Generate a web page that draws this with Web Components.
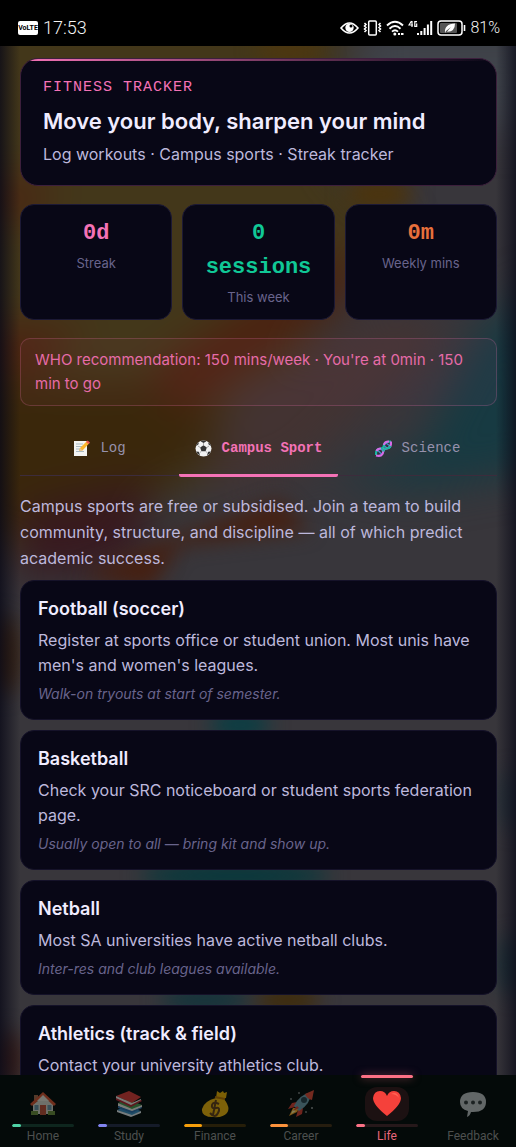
<!DOCTYPE html>
<html lang="en">
<head>
<meta charset="utf-8">
<meta name="viewport" content="width=device-width, initial-scale=1">
<title>Fitness Tracker</title>
<style>
  html, body { margin: 0; height: 100%; background: #000; }
  body {
    --pink: #f472b6; --green: #10c896; --orange: #e8703c;
    --ink: #f0ecff; --soft: #bdb8dc; --mute: #68648c;
    --card: #080716; --line: #1c1935;
    --mono: "Liberation Mono", monospace;
    font-family: Inter, "Liberation Sans", sans-serif;
    font-size: 16px; line-height: 24px; color: var(--soft);
  }
</style>
</head>
<body>
<fitness-app></fitness-app>

<template id="tpl-app">
  <style>
    :host { display: flex; flex-direction: column; height: 100vh; overflow: hidden; }
    .screen { position: relative; flex: 1; min-height: 0; overflow: hidden; display: flex; }
    main { position: relative; flex: 1; overflow-y: auto; scrollbar-width: none; padding: 12px 19px 24px 20px; }
    .stats { display: grid; grid-template-columns: repeat(3, 1fr); gap: 10px; margin: 18px 0; }
    .intro { margin: 16px 0 9px; line-height: 26px; }
    .list { display: grid; gap: 10px; }
  </style>
  <status-bar></status-bar>
  <div class="screen">
    <blur-backdrop></blur-backdrop>
    <main>
      <hero-card>
        <span slot="kicker">FITNESS TRACKER</span>
        <span slot="title">Move your body, sharpen your mind</span>
        <span slot="sub">Log workouts · Campus sports · Streak tracker</span>
      </hero-card>
      <section class="stats">
        <stat-tile style="--tone: var(--pink)">0d<span slot="label">Streak</span></stat-tile>
        <stat-tile style="--tone: var(--green)">0 sessions<span slot="label">This week</span></stat-tile>
        <stat-tile style="--tone: var(--orange)">0m<span slot="label">Weekly mins</span></stat-tile>
      </section>
      <goal-note>WHO recommendation: 150 mins/week · You're at 0min · 150 min to go</goal-note>
      <section-tabs></section-tabs>
      <p class="intro">Campus sports are free or subsidised. Join a team to build community, structure, and discipline — all of which predict academic success.</p>
      <div class="list">
        <sport-card><span slot="title">Football (soccer)</span>Register at sports office or student union. Most unis have men's and women's leagues.<span slot="note">Walk-on tryouts at start of semester.</span></sport-card>
        <sport-card><span slot="title">Basketball</span>Check your SRC noticeboard or student sports federation page.<span slot="note">Usually open to all — bring kit and show up.</span></sport-card>
        <sport-card><span slot="title">Netball</span>Most SA universities have active netball clubs.<span slot="note">Inter-res and club leagues available.</span></sport-card>
        <sport-card><span slot="title">Athletics (track &amp; field)</span>Contact your university athletics club.</sport-card>
      </div>
    </main>
  </div>
  <bottom-nav></bottom-nav>
</template>

<template id="tpl-status">
  <style>
    :host { display: flex; align-items: center; gap: 5px; height: 36px; padding: 10px 16px 0 18px; background: #000; color: #f4f4f4; font: 300 18px/36px Roboto, sans-serif; }
    .volte { font: 700 7px/14px Roboto, sans-serif; background: #fff; color: #000; border-radius: 2px; min-width: 20px; text-align: center; white-space: nowrap; }
    .icons { margin-left: auto; display: flex; align-items: center; gap: 4px; }
    svg { display: block; }
    .pct { font-size: 16px; }
  </style>
  <span class="volte">VoLTE</span><span>17:53</span>
  <div class="icons">
    <svg width="19" height="14" viewBox="0 0 19 14"><path d="M1 7Q9.500-3 18 7Q9.500 17 1 7Z" fill="none" stroke="#fff" stroke-width="1.600"/><circle cx="9.500" cy="6.800" r="4.200" fill="#fff"/><circle cx="11" cy="5" r="1.500" fill="#000"/></svg>
    <svg width="19" height="16" viewBox="0 0 19 16" fill="none" stroke="#fff"><rect x="5.700" y="1" width="7.600" height="14" rx="1" stroke-width="1.500"/><path d="M1.500 3l1.500 1.500-1.500 1.500 1.500 1.500-1.500 1.500 1.500 1.500-1.500 1.500M17.500 3l-1.500 1.500 1.500 1.500-1.500 1.500 1.500 1.500-1.500 1.500 1.500 1.500" stroke-width="1.500"/></svg>
    <svg width="18" height="16" viewBox="0 0 18 16" fill="none" stroke="#fff" stroke-width="1.900"><path d="M1 5.500Q9-2 17 5.500M3.500 8.700Q9 3.500 14.500 8.700M6 11.600Q9 9 12 11.600"/><circle cx="8.800" cy="14" r="1.500" fill="#fff" stroke="none"/><path d="M12 14h2m1 0h2.500" stroke-width="2.200"/></svg>
    <svg width="25" height="16" viewBox="0 0 25 16"><path d="M3.500 1L1 5h4M4 1v6M9 1.700H6.800v4.600H8.700V4H8" fill="none" stroke="#fff" stroke-width="1.200"/><path d="M9 13h2v2H9zM12.300 11h2v4h-2zM15.600 8h2v7h-2zM18.900 4.500h2V15h-2zM22.200 1h2v14h-2z" fill="#fff"/></svg>
    <svg width="29" height="16" viewBox="0 0 29 16"><rect x="1" y="1" width="24" height="14" rx="3" fill="none" stroke="#fff" stroke-width="1.500"/><rect x="3" y="3" width="17" height="10" rx="1" fill="#555"/><path d="M8 13Q7 4 18 3.500Q18 12 10 11.700L14 7L9 11Z" fill="#fff"/><path d="M27.500 5v6" stroke="#fff" stroke-width="1.600"/></svg>
    <span class="pct">81%</span>
  </div>
</template>

<template id="tpl-backdrop">
  <style>
    :host { position: absolute; inset: 0; }
    svg { display: block; width: 100%; height: 100%; }
    :host::after { content: ""; position: absolute; inset: 0; background: linear-gradient(90deg, rgba(8, 8, 22, .75), rgba(8, 8, 22, 0) 20px calc(100% - 20px), rgba(8, 8, 22, .7)); }
  </style>
  <svg viewBox="0 46 516 1029" preserveAspectRatio="none" aria-hidden="true">
    <defs><filter id="b" x="-30%" y="-30%" width="160%" height="160%" color-interpolation-filters="sRGB"><feGaussianBlur stdDeviation="20"/></filter>
    <filter id="s" x="-40%" y="-60%" width="180%" height="220%" color-interpolation-filters="sRGB"><feGaussianBlur stdDeviation="10"/></filter></defs>
    <rect y="46" width="516" height="1029" fill="#38363b"/>
    <g filter="url(#b)">
      <path d="M-40 0H345L330 160 400 230 320 330 250 400 200 480 60 560-40 540Z" fill="#43371a"/>
      <path d="M-40 380H170L230 430 120 520-40 540Z" fill="#3a270b"/>
      <path d="M-20 180L60 185 30 215-20 220ZM-20 325L90 330 20 380-20 370ZM150 370L350 240 350 300 180 415Z" fill="#4c2110"/>
      <path d="M230 390L400 310 450 330 300 470 200 500Z" fill="#433332"/>
      <path d="M540 280L480 330 420 450 330 480 420 490 540 470Z" fill="#173a42"/>
      <path d="M360 30H550V130H360Z" fill="#40444b"/>
      <path d="M20 510L150 480 140 560 20 580Z" fill="#38191f"/>
    </g>
    <g filter="url(#s)">
      <ellipse cx="290" cy="50" rx="35" ry="14" fill="#4d3710"/>
      <ellipse cx="380" cy="194" rx="34" ry="16" fill="#4c340c"/>
      <path d="M80 575L180 535 280 500 310 530 180 545 150 590Z" fill="#452012"/>
      <ellipse cx="4" cy="655" rx="16" ry="40" fill="#38210f"/>
      <ellipse cx="240" cy="725" rx="30" ry="14" fill="#083e44"/>
      <ellipse cx="235" cy="876" rx="95" ry="14" fill="#06383c"/>
      <ellipse cx="205" cy="1000" rx="45" ry="12" fill="#10343b"/>
      <ellipse cx="288" cy="1000" rx="32" ry="12" fill="#402b05"/>
      <ellipse cx="8" cy="1060" rx="16" ry="30" fill="#351c18"/>
      <ellipse cx="510" cy="965" rx="12" ry="30" fill="#1a3037"/>
      <ellipse cx="510" cy="800" rx="12" ry="30" fill="#25323a"/>
    </g>
  </svg>
</template>

<template id="tpl-hero">
  <style>
    :host { display: block; position: relative; overflow: hidden; border: 1px solid #3c1f3c; border-radius: 18px; background: var(--card); padding: 17px 22px 19px; }
    :host::before { content: ""; position: absolute; inset: 0 0 auto; height: 2px; background: linear-gradient(90deg, var(--pink), transparent); }
    .kicker { color: var(--pink); font: 15px/24px var(--mono); letter-spacing: 1px; }
    h1 { margin: 4px 0; font-size: 22px; line-height: 34px; font-weight: 600; color: var(--ink); }
  </style>
  <div class="kicker"><slot name="kicker"></slot></div>
  <h1><slot name="title"></slot></h1>
  <div><slot name="sub"></slot></div>
</template>

<template id="tpl-stat">
  <style>
    :host { display: block; border: 1px solid var(--line); border-radius: 14px; background: var(--card); padding: 12px 12px 10px; text-align: center; }
    .value { font: 700 22px/34px var(--mono); color: var(--tone); }
    .label { font-size: 13px; color: var(--mute); }
  </style>
  <div class="value"><slot></slot></div>
  <div class="label"><slot name="label"></slot></div>
</template>

<template id="tpl-note">
  <style>:host { display: block; border: 1px solid rgba(244, 114, 182, .22); border-radius: 10px; background: rgba(244, 114, 182, .04); padding: 9px 14px; font-size: 15px; color: #e66ba8; }</style>
  <slot></slot>
</template>

<template id="tpl-tabs">
  <style>
    :host { display: grid; grid-template-columns: repeat(3, 1fr); margin-top: 17px; background: linear-gradient(#3c2c3c, #3c2c3c) 0 52px / 100% 1px no-repeat; }
    button { all: unset; box-sizing: border-box; display: flex; justify-content: center; align-items: center; gap: 10px; padding: 13px 0 14px; border-bottom: 3px solid transparent; color: #9691ac; font: 14px/24px var(--mono); white-space: nowrap; cursor: pointer; }
    button[aria-selected="true"] { color: var(--pink); font-weight: 700; border-color: var(--pink); border-radius: 2px; }
    svg { width: 17px; height: 17px; display: block; }
  </style>
  <button role="tab" aria-selected="false"><svg viewBox="0 0 17 17"><path d="M1 1h13v15H1z" fill="#f4f4f2"/><path d="M3 4h7M3 6.500h6M3 9h5M3 11.500h8" stroke="#a9bac2"/><path d="M6 11l1-3 7-7 2.500 2-7 7.500z" fill="#fcb52d"/><path d="M13 2l1.500-1.500L17 2.500 15.500 4z" fill="#ef5350"/><path d="M6 11l1-3 2.500 2.500z" fill="#e4c39b"/></svg>Log</button>
  <button role="tab" aria-selected="true"><svg viewBox="0 0 17 17"><circle cx="8.500" cy="8.500" r="8" fill="#f2f2f2"/><path d="M8.500 5.200l3.300 2.300-1.200 3.700H6.400L5.200 7.500zM5.500 1.300L8.500 3l3-1.700Q8.500-.2 5.500 1.300ZM1 6.200l2.500-2L3.800 2.300Q1.200 4 1 6.200ZM16 6.200l-2.500-2-.3-1.900Q15.800 4 16 6.200ZM1 11.500l2.800.2 1.200 3.500Q2 14 1 11.500ZM16 11.500l-2.800.2-1.200 3.500Q15 14 16 11.500Z" fill="#343434"/><path d="M8.500 3v2.200M5.200 7.500L3 6M11.800 7.500L14 6M6.400 11.200L4.500 13M10.600 11.200l1.900 1.800" stroke="#888" stroke-width=".7"/></svg>Campus Sport</button>
  <button role="tab" aria-selected="false"><svg viewBox="0 0 17 17" fill="none" stroke-width="2.200"><path d="M3 10.500l4 4M6 9l3 3M9 5.500l3 2.500M11 3l4 3" stroke="#478bd2" stroke-width="1.300"/><path d="M1 15Q.5 8.500 6 8.500Q9 8.500 9 5Q9.500 1.500 16 1.500" stroke="#18b7a4"/><path d="M1 15.500Q8 17 8.200 11.500Q8.300 8.500 11.500 8.500Q16.500 8 16 1.500" stroke="#d66be8"/><path d="M1.500 11Q2.500 8.500 6 8.500M9 5Q9.500 1.500 14 1.500" stroke="#d66be8"/><path d="M8.200 11.500Q8.500 8.500 11.500 8.500Q14.500 8.300 15.500 6" stroke="#18b7a4"/></svg>Science</button>
</template>

<template id="tpl-sport">
  <style>
    :host { display: block; border: 1px solid #151229; border-radius: 14px; background: var(--card); padding: 14px 16px 14px 17px; }
    h2 { margin: 0 0 5px; font-size: 18px; line-height: 28px; font-weight: 600; color: var(--ink); }
    .text { line-height: 25px; }
    .note { margin-top: 5px; font-size: 14px; line-height: 22px; font-style: italic; color: var(--mute); }
  </style>
  <h2><slot name="title"></slot></h2>
  <div class="text"><slot></slot></div>
  <div class="note"><slot name="note"></slot></div>
</template>

<template id="tpl-nav">
  <style>
    :host { display: grid; grid-template-columns: repeat(6, 1fr); height: 72px; background: #040a09; }
  </style>
  <nav-item tone="#4fd1a5" level="15" icon="home">Home</nav-item>
  <nav-item tone="#8184f0" level="14" icon="study">Study</nav-item>
  <nav-item tone="#f59e0b" level="29" icon="money">Finance</nav-item>
  <nav-item tone="#fb923c" level="29" icon="rocket">Career</nav-item>
  <nav-item tone="#fb7185" level="14" icon="heart" active>Life</nav-item>
  <nav-item tone="transparent" level="0" icon="chat">Feedback</nav-item>
</template>

<template id="tpl-item">
  <style>
    :host { display: block; position: relative; }
    a { display: flex; flex-direction: column; align-items: center; height: 100%; padding-top: 12px; box-sizing: border-box; color: #4d504f; text-decoration: none; font: 12px/16px Roboto, sans-serif; }
    .icon { width: 44px; height: 34px; display: grid; place-items: center; border-radius: 12px; }
    .icon svg { width: 28px; height: 28px; opacity: .5; }
    .bar { width: 72%; height: 3px; border-radius: 2px; margin: 3px 0 1px; position: relative; overflow: hidden; }
    .bar::before { content: ""; position: absolute; inset: 0; background: var(--tone); opacity: .14; }
    .bar i { position: relative; display: block; height: 100%; border-radius: 2px; background: var(--tone); width: var(--level); }
    :host([active]) a { color: #e8667a; }
    :host([active]) .icon { background: #1c1112; }
    :host([active]) .icon svg { opacity: 1; }
    :host([active])::before { content: ""; position: absolute; top: 0; left: 20%; width: 60%; height: 3px; border-radius: 2px; background: var(--tone); box-shadow: 0 0 8px rgba(251, 113, 133, .5); }
  </style>
  <a href="#"><span class="icon"></span><span class="bar"><i></i></span><slot></slot></a>
</template>

<script>
  const ICONS = {
    home: '<path d="M4 13L14 4l10 9v11H4z" fill="#d8d5cb"/><path d="M5 5h4v6l-4 3z" fill="#a66a4b"/><path d="M1 14L14 2l13 12-2 2L14 6 3 16z" fill="#d9532f"/><path d="M14 5l6 6H8z" fill="#e9e4d8"/><path d="M11 15h6v10h-6z" fill="#bd4f38"/><path d="M5.500 15h4v5h-4zM18.500 15h4v5h-4z" fill="#6c94a7"/><path d="M2 21h7v4H2zM19 21h7v4h-7z" fill="#6c8d3c"/>',
    study: '<path d="M2 20l9-4 15 5-9 5z" fill="#3b8fc4"/><path d="M2 20v2l14 5 10-4v-2l-9 4z" fill="#e8eef2"/><path d="M3 13l9-4 15 6-10 5z" fill="#4a9b51"/><path d="M3 13v3l14 6 10-5v-2l-10 4z" fill="#f0eee4"/><path d="M3 16v2l14 5 10-5v-1l-10 4z" fill="#2c6fae"/><path d="M1 6l13-5 12 6-9 6z" fill="#df3c38"/><path d="M1 6v3l15 7 10-5V9l-9 4z" fill="#efe9e4"/><path d="M1 8v2l15 7 11-6-1-1-10 5z" fill="#b82632"/>',
    money: '<path d="M16 1l3 2 3-2 1 2 3-1-1 6-7 1-3-1z" fill="#f4b400"/><path d="M15 8l8 1q7 9 3 14-4 5-14 4Q0 27 1 19 3 11 15 8z" fill="#f5b80a"/><path d="M14 7l10 2" stroke="#bd7600" stroke-width="2"/><path d="M18 14q-6-3-7 1t4 3 2 5-8 0M15 10l-3 15" fill="none" stroke="#664018" stroke-width="2"/>',
    rocket: '<path d="M10 12l-5 1-4 6 7-2zM16 18l-1 6-6 3 2-7z" fill="#d93f31"/><path d="M6 18l-4 8 8-4 2-4z" fill="#f9a825"/><path d="M6 20l-2 4 5-3z" fill="#fff3a3"/><path d="M7 16Q12 5 24 2q0 12-12 19z" fill="#6f9cab"/><path d="M18 4l9-4-2 10q-5-1-7-6z" fill="#e44a35"/><circle cx="17" cy="10" r="3" fill="#29424d"/><path d="M10 16l-4 5 6-3z" fill="#d93f31"/><circle cx="4" cy="9" r=".7" fill="#fff"/><circle cx="12" cy="3" r=".7" fill="#fff"/><circle cx="25" cy="18" r=".8" fill="#fff"/><circle cx="19" cy="22" r=".7" fill="#fff"/>',
    heart: '<path d="M14 26Q0 15 0 8Q1 1 7 1Q12 1 14 6Q16 1 21 1Q27 1 28 8Q28 15 14 26Z" fill="#f5413b"/><path d="M18 4q6-3 8 4-3-4-8-4z" fill="#ff6253"/>',
    chat: '<path d="M14 2q13 0 13 10T14 22H12q-1 4-4 5l1-6Q1 19 1 12 1 2 14 2z" fill="#bfc3c4"/><circle cx="7" cy="12.500" r="2" fill="#353b3c"/><circle cx="14" cy="12.500" r="2" fill="#353b3c"/><circle cx="21" cy="12.500" r="2" fill="#353b3c"/>'
  };
  class Templated extends HTMLElement {
    connectedCallback() {
      if (this.shadowRoot) return;
      const tpl = document.getElementById(this.constructor.tpl);
      this.attachShadow({ mode: 'open' }).append(tpl.content.cloneNode(true));
      this.ready?.();
    }
  }
  class NavItem extends Templated {
    static tpl = 'tpl-item';
    ready() {
      this.style.setProperty('--tone', this.getAttribute('tone'));
      this.style.setProperty('--level', this.getAttribute('level') + '%');
      this.shadowRoot.querySelector('.icon').innerHTML = `<svg viewBox="0 0 28 28" aria-hidden="true">${ICONS[this.getAttribute('icon')]}</svg>`;
    }
  }
  class SportCard extends Templated {
    static tpl = 'tpl-sport';
    ready() { if (!this.querySelector('[slot=note]')) this.shadowRoot.querySelector('.note').remove(); }
  }
  customElements.define('status-bar', class extends Templated { static tpl = 'tpl-status'; });
  customElements.define('blur-backdrop', class extends Templated { static tpl = 'tpl-backdrop'; });
  customElements.define('hero-card', class extends Templated { static tpl = 'tpl-hero'; });
  customElements.define('stat-tile', class extends Templated { static tpl = 'tpl-stat'; });
  customElements.define('goal-note', class extends Templated { static tpl = 'tpl-note'; });
  customElements.define('section-tabs', class extends Templated {
    static tpl = 'tpl-tabs';
    ready() {
      this.setAttribute('role', 'tablist');
      const tabs = this.shadowRoot.querySelectorAll('button');
      tabs.forEach(t => t.addEventListener('click', () => tabs.forEach(o => o.setAttribute('aria-selected', o === t))));
    }
  });
  customElements.define('sport-card', SportCard);
  customElements.define('nav-item', NavItem);
  customElements.define('bottom-nav', class extends Templated { static tpl = 'tpl-nav'; });
  customElements.define('fitness-app', class extends Templated { static tpl = 'tpl-app'; });
</script>
</body>
</html>
